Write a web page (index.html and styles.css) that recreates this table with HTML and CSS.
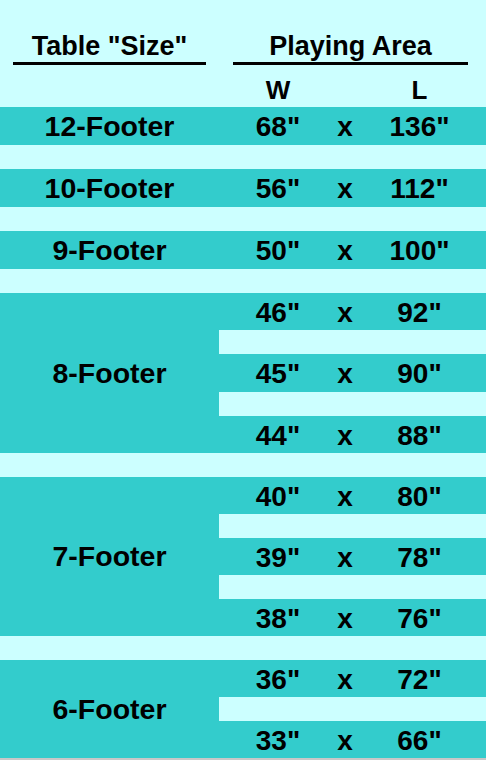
FILE: index.html
```html
<!DOCTYPE html>
<html lang="en">
<head>
<meta charset="utf-8">
<title>Table Size / Playing Area</title>
<link rel="stylesheet" href="styles.css">
</head>
<body>
<div class="chart">
  <div class="head">
    <div class="h-size">Table "Size"</div>
    <div class="h-area">Playing Area</div>
  </div>
  <div class="cols">
    <div class="c-w">W</div>
    <div class="c-l">L</div>
  </div>

  <div class="grp one">
    <div class="label">12-Footer</div>
    <div class="v w">68"</div><div class="v x">x</div><div class="v l">136"</div>
  </div>

  <div class="grp one">
    <div class="label">10-Footer</div>
    <div class="v w">56"</div><div class="v x">x</div><div class="v l">112"</div>
  </div>

  <div class="grp one">
    <div class="label">9-Footer</div>
    <div class="v w">50"</div><div class="v x">x</div><div class="v l">100"</div>
  </div>

  <div class="grp three-a">
    <div class="label">8-Footer</div>
    <div class="v w">46"</div><div class="v x">x</div><div class="v l">92"</div>
    <div class="gap"></div>
    <div class="v w">45"</div><div class="v x">x</div><div class="v l">90"</div>
    <div class="gap"></div>
    <div class="v w">44"</div><div class="v x">x</div><div class="v l">88"</div>
  </div>

  <div class="grp three">
    <div class="label">7-Footer</div>
    <div class="v w">40"</div><div class="v x">x</div><div class="v l">80"</div>
    <div class="gap"></div>
    <div class="v w">39"</div><div class="v x">x</div><div class="v l">78"</div>
    <div class="gap"></div>
    <div class="v w">38"</div><div class="v x">x</div><div class="v l">76"</div>
  </div>

  <div class="grp two last">
    <div class="label">6-Footer</div>
    <div class="v w">36"</div><div class="v x">x</div><div class="v l">72"</div>
    <div class="gap"></div>
    <div class="v w">33"</div><div class="v x">x</div><div class="v l">66"</div>
  </div>

  <div class="edge"></div>
</div>
</body>
</html>
```
FILE: styles.css
```css
html, body {
  margin: 0;
  padding: 0;
}

body {
  background: #ccffff;
  font-family: "Liberation Sans", Arial, sans-serif;
  font-weight: bold;
  color: #000;
  overflow: hidden;
}

.chart {
  width: 486px;
}

.head {
  display: grid;
  grid-template-columns: 219px 1fr;
  padding-top: 31px;
  font-size: 27px;
  line-height: 31px;
  text-align: center;
}

.h-size {
  margin: 0 13px;
  border-bottom: 3px solid #000;
}

.h-area {
  margin: 0 18px 0 14px;
  border-bottom: 3px solid #000;
}

.cols {
  display: grid;
  grid-template-columns: 219px 118px 16px 1fr;
  padding: 10px 0 2px;
  font-size: 26px;
  line-height: 30px;
  text-align: center;
}

.c-w {
  grid-column: 2;
}

.c-l {
  grid-column: 4;
}

.grp {
  display: grid;
  grid-template-columns: 219px 118px 16px 1fr;
  background: #33cccc;
  margin-bottom: 24px;
  text-align: center;
}

.grp.last {
  margin-bottom: 0;
}

.one {
  grid-template-rows: 38px;
}

.two {
  grid-template-rows: 37px 24px 37px;
}

.three {
  grid-template-rows: 37px 24px 37px 24px 37px;
}

.three-a {
  grid-template-rows: 37px 24px 38px 24px 37px;
}

.label {
  grid-column: 1;
  grid-row: 1 / -1;
  align-self: center;
  font-size: 28.5px;
  line-height: 1;
}

.v {
  align-self: center;
  font-size: 28px;
  line-height: 1;
  padding-top: 2px;
}

.w {
  grid-column: 2;
}

.x {
  grid-column: 3;
}

.l {
  grid-column: 4;
}

.gap {
  grid-column: 2 / -1;
  background: #ccffff;
}

.edge {
  height: 2px;
  background: #c8c8c8;
}
```
